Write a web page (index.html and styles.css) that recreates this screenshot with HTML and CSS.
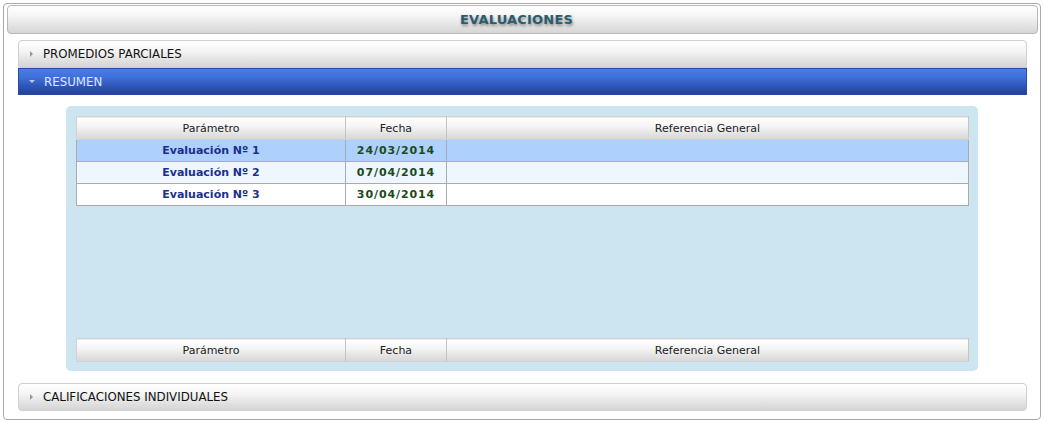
FILE: index.html
```html
<!DOCTYPE html>
<html lang="es">
<head>
<meta charset="utf-8">
<title>Evaluaciones</title>
<link rel="stylesheet" href="styles.css">
</head>
<body>
<div class="frame">
  <div class="title-bar"><h1>EVALUACIONES</h1></div>
  <div class="accordion">
    <div class="acc-head first"><span class="arrow right"></span>PROMEDIOS PARCIALES</div>
    <div class="acc-head active"><span class="arrow down"></span>RESUMEN</div>
    <div class="acc-body">
      <div class="panel">
        <table class="grid">
          <colgroup><col class="c1"><col class="c2"><col class="c3"></colgroup>
          <thead>
            <tr><th>Parámetro</th><th>Fecha</th><th>Referencia General</th></tr>
          </thead>
          <tbody>
            <tr class="sel"><td class="name">Evaluación Nº 1</td><td class="date">24/03/2014</td><td></td></tr>
            <tr class="alt"><td class="name">Evaluación Nº 2</td><td class="date">07/04/2014</td><td></td></tr>
            <tr><td class="name">Evaluación Nº 3</td><td class="date">30/04/2014</td><td></td></tr>
          </tbody>
        </table>
        <div class="spacer"></div>
        <table class="grid foot">
          <colgroup><col class="c1"><col class="c2"><col class="c3"></colgroup>
          <thead>
            <tr><th>Parámetro</th><th>Fecha</th><th>Referencia General</th></tr>
          </thead>
        </table>
      </div>
    </div>
    <div class="acc-head last"><span class="arrow right"></span>CALIFICACIONES INDIVIDUALES</div>
  </div>
</div>
</body>
</html>
```
FILE: styles.css
```css
* { box-sizing: border-box; }
html, body { margin: 0; padding: 0; background: #fff; }
body {
  font-family: "DejaVu Sans", Verdana, sans-serif;
  font-size: 11px;
  color: #222;
  padding: 3px 3px 1px 3px;
}
.frame {
  border: 1px solid #a9a9a9;
  border-radius: 4px;
  height: 417px;
  padding: 1px 2px 0 3px;
}
.title-bar {
  height: 29px;
  border: 1px solid #b8b8b8;
  border-radius: 4px;
  background: linear-gradient(to bottom, #ffffff 0%, #f6f6f6 35%, #e2e2e2 75%, #d6d6d6 100%);
  display: flex;
  align-items: center;
  justify-content: center;
}
.title-bar h1 {
  margin: 0;
  font-size: 13px;
  font-weight: bold;
  color: #2a5c70;
  letter-spacing: 0.2px;
  text-shadow: 1px 2px 3px #8a8a8a;
  padding-right: 12px;
}
.accordion {
  margin: 6px 11px 0 11px;
}
.acc-head {
  height: 28px;
  display: flex;
  align-items: center;
  padding-left: 10px;
  border: 1px solid #cfcfcf;
  background: linear-gradient(to bottom, #ffffff 0%, #f4f4f4 40%, #dedede 80%, #d6d6d6 100%);
  color: #111;
  font-size: 11.8px;
}
.acc-head.first { border-radius: 4px 4px 0 0; }
.acc-head.last { border-radius: 4px; }
.acc-head.active {
  height: 27px;
  border-color: #2a4aa0;
  background: linear-gradient(to bottom, #4b7de6 0%, #3f6fd8 35%, #2d55b6 70%, #22429a 100%);
  color: #dfe8ff;
}
.arrow {
  width: 0;
  height: 0;
  margin-right: 10px;
  margin-left: 1px;
}
.arrow.right {
  border-top: 3px solid transparent;
  border-bottom: 3px solid transparent;
  border-left: 3px solid #999;
}
.arrow.down {
  border-left: 3px solid transparent;
  border-right: 3px solid transparent;
  border-top: 3px solid #b8c8ee;
  margin-left: 0;
  margin-right: 9px;
}
.acc-body {
  padding: 11px 49px 12px 48px;
}
.panel {
  background: #cde5f0;
  border-radius: 5px;
  padding: 10px 9px 9px 10px;
  height: 265px;
  display: flex;
  flex-direction: column;
}
.spacer { flex: 1; }
.grid {
  width: 100%;
  border-collapse: collapse;
  table-layout: fixed;
  background: #fff;
}
.grid col.c1 { width: 269px; }
.grid col.c2 { width: 101px; }
.grid th {
  height: 23px;
  font-weight: normal;
  color: #222;
  border: 1px solid #d2d2d2;
  border-right-color: #c4c4c4;
  background: linear-gradient(to bottom, #ffffff 0%, #f5f5f5 40%, #e0e0e0 80%, #d7d7d7 100%);
  padding: 0;
  text-align: center;
}
.grid tbody td {
  height: 22px;
  border: 1px solid #ababab;
  text-align: center;
  font-weight: bold;
  padding: 0;
}
.grid tbody tr { background: #fff; }
.grid tbody tr.sel { background: #aed0fc; }
.grid tbody tr.alt { background: #eef6ff; }
.grid td.name { color: #1b2f8c; letter-spacing: 0; }
.grid td.date { color: #1c4a1c; letter-spacing: 0.9px; }
.grid.foot th { height: 23px; }
```
